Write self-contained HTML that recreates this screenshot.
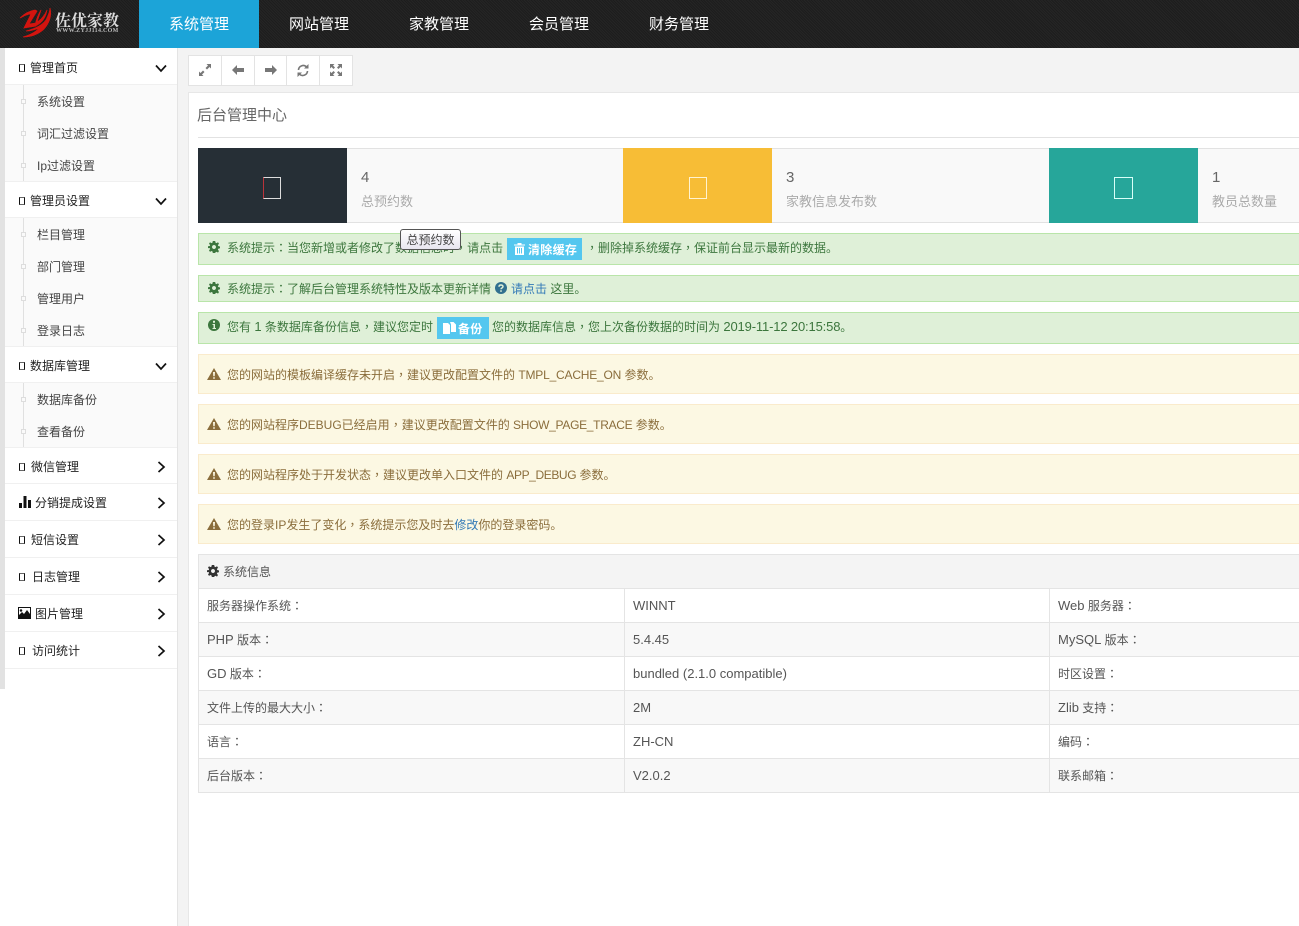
<!DOCTYPE html>
<html><head><meta charset="utf-8"><title>后台管理中心</title>
<style>
*{box-sizing:border-box}
html,body{margin:0;padding:0;width:1299px;height:926px;overflow:hidden;background:#fff}
body{position:relative;font:12px/16px "Liberation Sans","Noto Sans CJK SC",sans-serif;color:#333}
.a{position:absolute;white-space:nowrap}
.l{font-size:13px}
.p{font-family:"Noto Sans CJK TC",sans-serif;font-feature-settings:"locl" 0}
svg{display:block}
#top{left:0;top:0;width:1299px;height:48px;background:#222;background-image:repeating-linear-gradient(45deg,#252525 0 1px,#1d1d1d 1px 2px)}
.nav{top:0;height:48px;width:120px;text-align:center;font-size:15px;line-height:49px;color:#fff}
.pr{left:5px;width:172px;background:#fff}
.dv{left:5px;width:172px;height:1px;background:#f0f0f0}
.sub{left:5px;width:172px;background:#fafafa}
.vl{left:23px;width:1px;background:#e0e0e0}
.sq{left:21px;width:5px;height:5px;background:#fafafa;border:1px solid #ddd}
.tf{left:19px;width:6px;height:8px;border:1px solid #111;border-top-color:#666;border-bottom-color:#666}
.pt{left:30px;color:#222}
.st{left:37px;color:#444}
.ch{left:155px}
.btn{top:55px;height:31px;background:#fff;border:1px solid #e3e3e3}
.alert{left:198px;width:1101px;border:1px solid #b9e5a9;background:#dff0d8;color:#3c763d;border-right:0}
.warn{left:198px;width:1101px;height:40px;border:1px solid #faebcc;background:#fcf8e3;color:#8a6d3b;border-right:0}
.sb{top:148px;height:75px;background:#f9f9f9;border-top:1px solid #e2e2e2;border-bottom:1px solid #e2e2e2}
.si{top:148px;height:75px}
.sn{top:169px;font-size:15px;line-height:18px;color:#666}
.sl{top:194px;font-size:13px;line-height:16px;color:#aaa}
.tb{left:198px;width:1101px;height:34px;border-bottom:1px solid #e4e4e4}
.c{line-height:33px;margin-top:0;color:#555}
.v{line-height:33px;color:#555;font-size:13px}
.cb{background:#e4e4e4;width:1px}
.lbl{background:#54c7ef;color:#fff;height:22px;line-height:24px;font-size:12px;letter-spacing:.3px;font-weight:700}
a{color:#337ab7;text-decoration:none}
</style></head><body>

<div class="a" id="top"></div>
<svg class="a" style="left:0;top:0" width="60" height="44" viewBox="0 0 60 44"><g fill="#d3140f" stroke="#d3140f" stroke-width=".8"><path d="M20 18C24 14 29 11 35 10L37 11 29 24 37 23 36 26 24 28 31 14C27 14 24 16 20 18Z"/><path d="M41 10 37 22C41 20 45 15 47 10L46 14C44 20 40 24 35 26 36 20 38 15 41 10Z"/><path d="M50 8C52 16 49 24 43 30 37 35 30 37 23 37 30 35 36 32 39 28 34 30 30 31 26 31 34 29 42 26 46 20 48 16 50 12 50 8Z"/></g></svg>
<div class="a" style="left:55px;top:10px;color:#ddd;font:700 16px/20px 'Noto Serif CJK SC','Noto Sans CJK SC',serif">佐优家教</div>
<div class="a" style="left:56px;top:28px;color:#bbb;font:700 6px/7px 'Liberation Serif',serif;letter-spacing:.3px">WWW.ZYJJ114.COM</div>
<div class="a nav" style="left:139px;background:#1ca4d8">系统管理</div>
<div class="a nav" style="left:259px">网站管理</div>
<div class="a nav" style="left:379px">家教管理</div>
<div class="a nav" style="left:499px">会员管理</div>
<div class="a nav" style="left:619px">财务管理</div>

<div class="a" style="left:0;top:48px;width:5px;height:641px;background:#e2e2e2"></div>
<div class="a" style="left:177px;top:48px;width:1122px;height:878px;background:#f3f3f3;border-left:1px solid #e4e4e4"></div>

<div class="a pr" style="top:48px;height:641px"></div>
<div class="a sub" style="top:85px;height:96px"></div>
<div class="a sub" style="top:218px;height:128px"></div>
<div class="a sub" style="top:383px;height:64px"></div>
<div class="a dv" style="top:84px"></div><div class="a dv" style="top:181px"></div><div class="a dv" style="top:217px"></div><div class="a dv" style="top:346px"></div><div class="a dv" style="top:382px"></div><div class="a dv" style="top:447px"></div><div class="a dv" style="top:483px"></div><div class="a dv" style="top:520px"></div><div class="a dv" style="top:557px"></div><div class="a dv" style="top:594px"></div><div class="a dv" style="top:631px"></div><div class="a dv" style="top:668px"></div>

<div class="a vl" style="top:85px;height:96px"></div>
<div class="a vl" style="top:218px;height:128px"></div>
<div class="a vl" style="top:383px;height:64px"></div>
<div class="a sq" style="top:99px"></div><div class="a sq" style="top:131px"></div><div class="a sq" style="top:163px"></div>
<div class="a sq" style="top:232px"></div><div class="a sq" style="top:264px"></div><div class="a sq" style="top:296px"></div><div class="a sq" style="top:328px"></div>
<div class="a sq" style="top:397px"></div><div class="a sq" style="top:429px"></div>

<div class="a tf" style="top:64px"></div><div class="a pt" style="top:60px">管理首页</div>
<div class="a st" style="top:94px">系统设置</div><div class="a st" style="top:126px">词汇过滤设置</div><div class="a st" style="top:158px">Ip过滤设置</div>
<div class="a tf" style="top:197px"></div><div class="a pt" style="top:193px">管理员设置</div>
<div class="a st" style="top:227px">栏目管理</div><div class="a st" style="top:259px">部门管理</div><div class="a st" style="top:291px">管理用户</div><div class="a st" style="top:323px">登录日志</div>
<div class="a tf" style="top:362px"></div><div class="a pt" style="top:358px">数据库管理</div>
<div class="a st" style="top:392px">数据库备份</div><div class="a st" style="top:424px">查看备份</div>
<div class="a tf" style="top:463px"></div><div class="a pt" style="left:31px;top:459px">微信管理</div>
<svg class="a" style="left:19px;top:496px" width="12" height="12" viewBox="0 0 12 12"><path fill="#111" d="M0 7h3v5H0zM4.500 0h3v12h-3zM9 4h3v8H9z"/></svg><div class="a pt" style="left:35px;top:495px">分销提成设置</div>
<div class="a tf" style="top:536px"></div><div class="a pt" style="left:31px;top:532px">短信设置</div>
<div class="a tf" style="top:573px"></div><div class="a pt" style="left:32px;top:569px">日志管理</div>
<svg class="a" style="left:18px;top:607px" width="13" height="12" viewBox="0 0 13 12"><path fill-rule="evenodd" fill="#111" d="M0 0h13v12H0zM1 1v7l3-3 2 2 3-4 3 4V1zM3 2.200a1.300 1.300 0 1 0 .01 0z"/></svg><div class="a pt" style="left:35px;top:606px">图片管理</div>
<div class="a tf" style="top:647px"></div><div class="a pt" style="left:32px;top:643px">访问统计</div>

<svg class="a ch" style="top:64px" width="12" height="9" viewBox="0 0 12 9"><path d="M1 1.500 6 7l5-5.500" fill="none" stroke="#111" stroke-width="1.700"/></svg>
<svg class="a ch" style="top:197px" width="12" height="9" viewBox="0 0 12 9"><path d="M1 1.500 6 7l5-5.500" fill="none" stroke="#111" stroke-width="1.700"/></svg>
<svg class="a ch" style="top:362px" width="12" height="9" viewBox="0 0 12 9"><path d="M1 1.500 6 7l5-5.500" fill="none" stroke="#111" stroke-width="1.700"/></svg>
<svg class="a" style="left:157px;top:461px" width="9" height="12" viewBox="0 0 9 12"><path d="M1.500 1 7 6l-5.500 5" fill="none" stroke="#111" stroke-width="1.700"/></svg>
<svg class="a" style="left:157px;top:497px" width="9" height="12" viewBox="0 0 9 12"><path d="M1.500 1 7 6l-5.500 5" fill="none" stroke="#111" stroke-width="1.700"/></svg>
<svg class="a" style="left:157px;top:534px" width="9" height="12" viewBox="0 0 9 12"><path d="M1.500 1 7 6l-5.500 5" fill="none" stroke="#111" stroke-width="1.700"/></svg>
<svg class="a" style="left:157px;top:571px" width="9" height="12" viewBox="0 0 9 12"><path d="M1.500 1 7 6l-5.500 5" fill="none" stroke="#111" stroke-width="1.700"/></svg>
<svg class="a" style="left:157px;top:608px" width="9" height="12" viewBox="0 0 9 12"><path d="M1.500 1 7 6l-5.500 5" fill="none" stroke="#111" stroke-width="1.700"/></svg>
<svg class="a" style="left:157px;top:645px" width="9" height="12" viewBox="0 0 9 12"><path d="M1.500 1 7 6l-5.500 5" fill="none" stroke="#111" stroke-width="1.700"/></svg>

<div class="a btn" style="left:188px;width:34px"></div><div class="a btn" style="left:221px;width:34px"></div><div class="a btn" style="left:254px;width:33px"></div><div class="a btn" style="left:286px;width:34px"></div><div class="a btn" style="left:319px;width:34px"></div>
<svg class="a" style="left:199px;top:64px" width="12" height="12" viewBox="0 0 12 12"><path fill="#777" d="M7.500 0H12v4.500L10.500 3 8 5.500 6.500 4 9 1.500zM4.500 12H0V7.500L1.500 9 4 6.500 5.500 8 3 10.500z"/></svg>
<svg class="a" style="left:232px;top:65px" width="12" height="10" viewBox="0 0 12 10"><path fill="#777" d="M0 5 5 0v3h7v4H5v3z"/></svg>
<svg class="a" style="left:265px;top:65px" width="12" height="10" viewBox="0 0 12 10"><path fill="#777" d="M12 5 7 0v3H0v4h7v3z"/></svg>
<svg class="a" style="left:297px;top:64px" width="12" height="13" viewBox="0 0 12 13"><path fill="none" stroke="#777" stroke-width="1.600" d="M1.500 6A4.700 4.700 0 0 1 9.600 3M10.500 7a4.700 4.700 0 0 1-8.100 3"/><path fill="#777" d="M11.500 0v4.500H7zM.5 13V8.500H5z"/></svg>
<svg class="a" style="left:330px;top:64px" width="12" height="12" viewBox="0 0 12 12"><path fill="#777" d="M0 0h4.500L3 1.500 5 3.500 3.500 5l-2-2L0 4.500zM12 0v4.500L10.500 3l-2 2L7 3.500l2-2L7.500 0zM0 12V7.500L1.500 9l2-2L5 8.500l-2 2L4.500 12zM12 12H7.500L9 10.500l-2-2L8.500 7l2 2L12 7.500z"/></svg>

<div class="a" style="left:188px;top:92px;width:1111px;height:834px;background:#fff;border:1px solid #e7e7e7;border-width:1px 0 0 1px"></div>
<div class="a" style="left:197px;top:106px;font-size:15px;line-height:20px;color:#666">后台管理中心</div>
<div class="a" style="left:198px;top:137px;width:1101px;height:1px;background:#e2e2e2"></div>

<div class="a sb" style="left:347px;width:276px"></div>
<div class="a sb" style="left:772px;width:277px"></div>
<div class="a sb" style="left:1198px;width:101px"></div>
<div class="a si" style="left:198px;width:149px;background:#262f36"></div>
<div class="a si" style="left:623px;width:149px;background:#f7bd36"></div>
<div class="a si" style="left:1049px;width:149px;background:#26a69a"></div>
<div class="a" style="left:263px;top:177px;width:18px;height:22px;border:1px solid #ddd;border-left-color:#b9333a"></div>
<div class="a" style="left:689px;top:177px;width:18px;height:22px;border:1px solid #fff3d0"></div>
<div class="a" style="left:1114px;top:177px;width:19px;height:22px;border:1px solid #d8fff8"></div>
<div class="a sn" style="left:361px">4</div><div class="a sl" style="left:361px">总预约数</div>
<div class="a sn" style="left:786px">3</div><div class="a sl" style="left:786px">家教信息发布数</div>
<div class="a sn" style="left:1212px">1</div><div class="a sl" style="left:1212px">教员总数量</div>

<div class="a alert" style="top:233px;height:32px"></div>
<svg class="a" style="left:208px;top:241px" width="12" height="12" viewBox="0 0 12 12"><path fill="#3c763d" fill-rule="evenodd" d="M4.800 0h2.400l.3 1.600 1.100.5L10 1.200 11 2.800 9.900 4l.3 1 1.800.5v1.800l-1.800.5-.3 1 1.100 1.200-1 1.600-1.400-.9-1.100.5L7.200 12H4.800l-.3-1.500-1.100-.5-1.400.9-1-1.600 1.100-1.200-.3-1L0 7.100V5.300l1.800-.3.300-1L1 2.800l1-1.600 1.400.9 1.100-.5zM6 4a2 2 0 1 0 .01 0z"/></svg>
<div class="a" style="left:227px;top:240px;color:#3c763d">系统提示<span class="p">：</span>当您新增或者修改了数据信息时<span class="p">，</span>请点击</div>
<div class="a lbl" style="left:507px;top:238px;width:75px;padding-left:21px">清除缓存</div>
<svg class="a" style="left:514px;top:243px" width="11" height="12" viewBox="0 0 11 12"><path fill="#fff" fill-rule="evenodd" d="M0 1.500h3.500V0h4v1.500H11v1H0zM1 3.500h9V12H1zM3 5v5.500h1V5zM5 5v5.500h1V5zM7 5v5.500h1V5z"/></svg>
<div class="a" style="left:586px;top:240px;color:#3c763d"><span class="p">，</span>删除掉系统缓存<span class="p">，</span>保证前台显示最新的数据。</div>

<div class="a alert" style="top:275px;height:27px"></div>
<svg class="a" style="left:208px;top:282px" width="12" height="12" viewBox="0 0 12 12"><path fill="#3c763d" fill-rule="evenodd" d="M4.800 0h2.400l.3 1.600 1.100.5L10 1.200 11 2.800 9.900 4l.3 1 1.800.5v1.800l-1.800.5-.3 1 1.100 1.200-1 1.600-1.400-.9-1.100.5L7.200 12H4.800l-.3-1.500-1.100-.5-1.400.9-1-1.600 1.100-1.200-.3-1L0 7.100V5.300l1.800-.3.300-1L1 2.800l1-1.600 1.400.9 1.100-.5zM6 4a2 2 0 1 0 .01 0z"/></svg>
<div class="a" style="left:227px;top:281px;color:#3c763d">系统提示<span class="p">：</span>了解后台管理系统特性及版本更新详情</div>
<svg class="a" style="left:495px;top:282px" width="12" height="12" viewBox="0 0 12 12"><circle cx="6" cy="6" r="6" fill="#31708f"/><path d="M4 4.800C4 2.500 8 2.500 8 4.600 8 6 6 6 6 7.200" fill="none" stroke="#dff0d8" stroke-width="1.500"/><path fill="#dff0d8" d="M5.200 8.300h1.600v1.500H5.200z"/></svg>
<div class="a" style="left:511px;top:281px;color:#3c763d"><a href="#">请点击</a> 这里。</div>

<div class="a alert" style="top:312px;height:32px"></div>
<svg class="a" style="left:208px;top:319px" width="12" height="12" viewBox="0 0 12 12"><circle cx="6" cy="6" r="6" fill="#3c763d"/><path fill="#dff0d8" d="M5 1.800h2v2H5zM4.500 5h2.500v4h1v1H4.500V9h1V6h-1z"/></svg>
<div class="a" style="left:227px;top:319px;color:#3c763d">您有 <span class="l">1</span> 条数据库备份信息<span class="p">，</span>建议您定时</div>
<div class="a lbl" style="left:437px;top:317px;width:52px;padding-left:21px">备份</div>
<svg class="a" style="left:443px;top:322px" width="13" height="12" viewBox="0 0 13 12"><path fill="#fff" d="M0 1h5l2 2v9H0zM7 0h3.500L13 2.500V10H8V2.500z"/></svg>
<div class="a" style="left:492px;top:319px;color:#3c763d">您的数据库信息<span class="p">，</span>您上次备份数据的时间为 <span class="l" style="letter-spacing:-.15px">2019-11-12 20:15:58</span>。</div>

<div class="a warn" style="top:354px"></div>
<div class="a warn" style="top:404px"></div>
<div class="a warn" style="top:454px"></div>
<div class="a warn" style="top:504px"></div>
<svg class="a" style="left:207px;top:368px" width="14" height="12" viewBox="0 0 14 12"><path fill="#8a6d3b" fill-rule="evenodd" d="M7 0l7 12H0zM6 4l.3 4.300h1.400L8 4zM6.200 9.200v1.500h1.600V9.200z"/></svg>
<svg class="a" style="left:207px;top:418px" width="14" height="12" viewBox="0 0 14 12"><path fill="#8a6d3b" fill-rule="evenodd" d="M7 0l7 12H0zM6 4l.3 4.300h1.400L8 4zM6.200 9.200v1.500h1.600V9.200z"/></svg>
<svg class="a" style="left:207px;top:468px" width="14" height="12" viewBox="0 0 14 12"><path fill="#8a6d3b" fill-rule="evenodd" d="M7 0l7 12H0zM6 4l.3 4.300h1.400L8 4zM6.200 9.200v1.500h1.600V9.200z"/></svg>
<svg class="a" style="left:207px;top:518px" width="14" height="12" viewBox="0 0 14 12"><path fill="#8a6d3b" fill-rule="evenodd" d="M7 0l7 12H0zM6 4l.3 4.300h1.400L8 4zM6.200 9.200v1.500h1.600V9.200z"/></svg>
<div class="a" style="left:227px;top:367px;color:#8a6d3b">您的网站的模板编译缓存未开启<span class="p">，</span>建议更改配置文件的 <span style="letter-spacing:-.2px">TMPL_CACHE_ON</span> 参数。</div>
<div class="a" style="left:227px;top:417px;color:#8a6d3b">您的网站程序DEBUG已经启用<span class="p">，</span>建议更改配置文件的 <span style="letter-spacing:-.3px">SHOW_PAGE_TRACE</span> 参数。</div>
<div class="a" style="left:227px;top:467px;color:#8a6d3b">您的网站程序处于开发状态<span class="p">，</span>建议更改单入口文件的 <span style="letter-spacing:-.4px">APP_DEBUG</span> 参数。</div>
<div class="a" style="left:227px;top:517px;color:#8a6d3b">您的登录IP发生了变化<span class="p">，</span>系统提示您及时去<a href="#">修改</a>你的登录密码。</div>

<div class="a" style="left:198px;top:554px;width:1101px;height:35px;background:#f4f4f4;border:solid #e4e4e4;border-width:1px 0 1px 1px"></div>
<svg class="a" style="left:207px;top:565px" width="12" height="12" viewBox="0 0 12 12"><path fill="#333" fill-rule="evenodd" d="M4.800 0h2.400l.3 1.600 1.100.5L10 1.200 11 2.800 9.900 4l.3 1 1.800.5v1.800l-1.800.5-.3 1 1.100 1.200-1 1.600-1.400-.9-1.100.5L7.200 12H4.800l-.3-1.500-1.100-.5-1.400.9-1-1.600 1.100-1.200-.3-1L0 7.100V5.300l1.800-.3.300-1L1 2.800l1-1.600 1.400.9 1.100-.5zM6 4a2 2 0 1 0 .01 0z"/></svg>
<div class="a" style="left:223px;top:564px;color:#555">系统信息</div>

<div class="a tb" style="top:589px;background:#fff"></div>
<div class="a tb" style="top:623px;background:#f8f8f8"></div>
<div class="a tb" style="top:657px;background:#fff"></div>
<div class="a tb" style="top:691px;background:#f8f8f8"></div>
<div class="a tb" style="top:725px;background:#fff"></div>
<div class="a tb" style="top:759px;background:#f8f8f8"></div>
<div class="a cb" style="left:198px;top:589px;height:204px"></div>
<div class="a cb" style="left:624px;top:589px;height:204px"></div>
<div class="a cb" style="left:1049px;top:589px;height:204px"></div>

<div class="a c" style="left:207px;top:589px">服务器操作系统<span class="p">：</span></div><div class="a v" style="left:633px;top:589px">WINNT</div><div class="a c" style="left:1058px;top:589px"><span class="l">Web</span> 服务器<span class="p">：</span></div>
<div class="a c" style="left:207px;top:623px"><span class="l">PHP</span> 版本<span class="p">：</span></div><div class="a v" style="left:633px;top:623px">5.4.45</div><div class="a c" style="left:1058px;top:623px"><span class="l">MySQL</span> 版本<span class="p">：</span></div>
<div class="a c" style="left:207px;top:657px"><span class="l">GD</span> 版本<span class="p">：</span></div><div class="a v" style="left:633px;top:657px">bundled (2.1.0 compatible)</div><div class="a c" style="left:1058px;top:657px">时区设置<span class="p">：</span></div>
<div class="a c" style="left:207px;top:691px">文件上传的最大大小<span class="p">：</span></div><div class="a v" style="left:633px;top:691px">2M</div><div class="a c" style="left:1058px;top:691px"><span class="l">Zlib</span> 支持<span class="p">：</span></div>
<div class="a c" style="left:207px;top:725px">语言<span class="p">：</span></div><div class="a v" style="left:633px;top:725px">ZH-CN</div><div class="a c" style="left:1058px;top:725px">编码<span class="p">：</span></div>
<div class="a c" style="left:207px;top:759px">后台版本<span class="p">：</span></div><div class="a v" style="left:633px;top:759px">V2.0.2</div><div class="a c" style="left:1058px;top:759px">联系邮箱<span class="p">：</span></div>

<div class="a" style="left:400px;top:229px;width:61px;height:21px;border:1px solid #555;border-radius:3px;background:linear-gradient(#fff,#e8e6f0);text-align:center;line-height:20px;color:#444">总预约数</div>
</body></html>
